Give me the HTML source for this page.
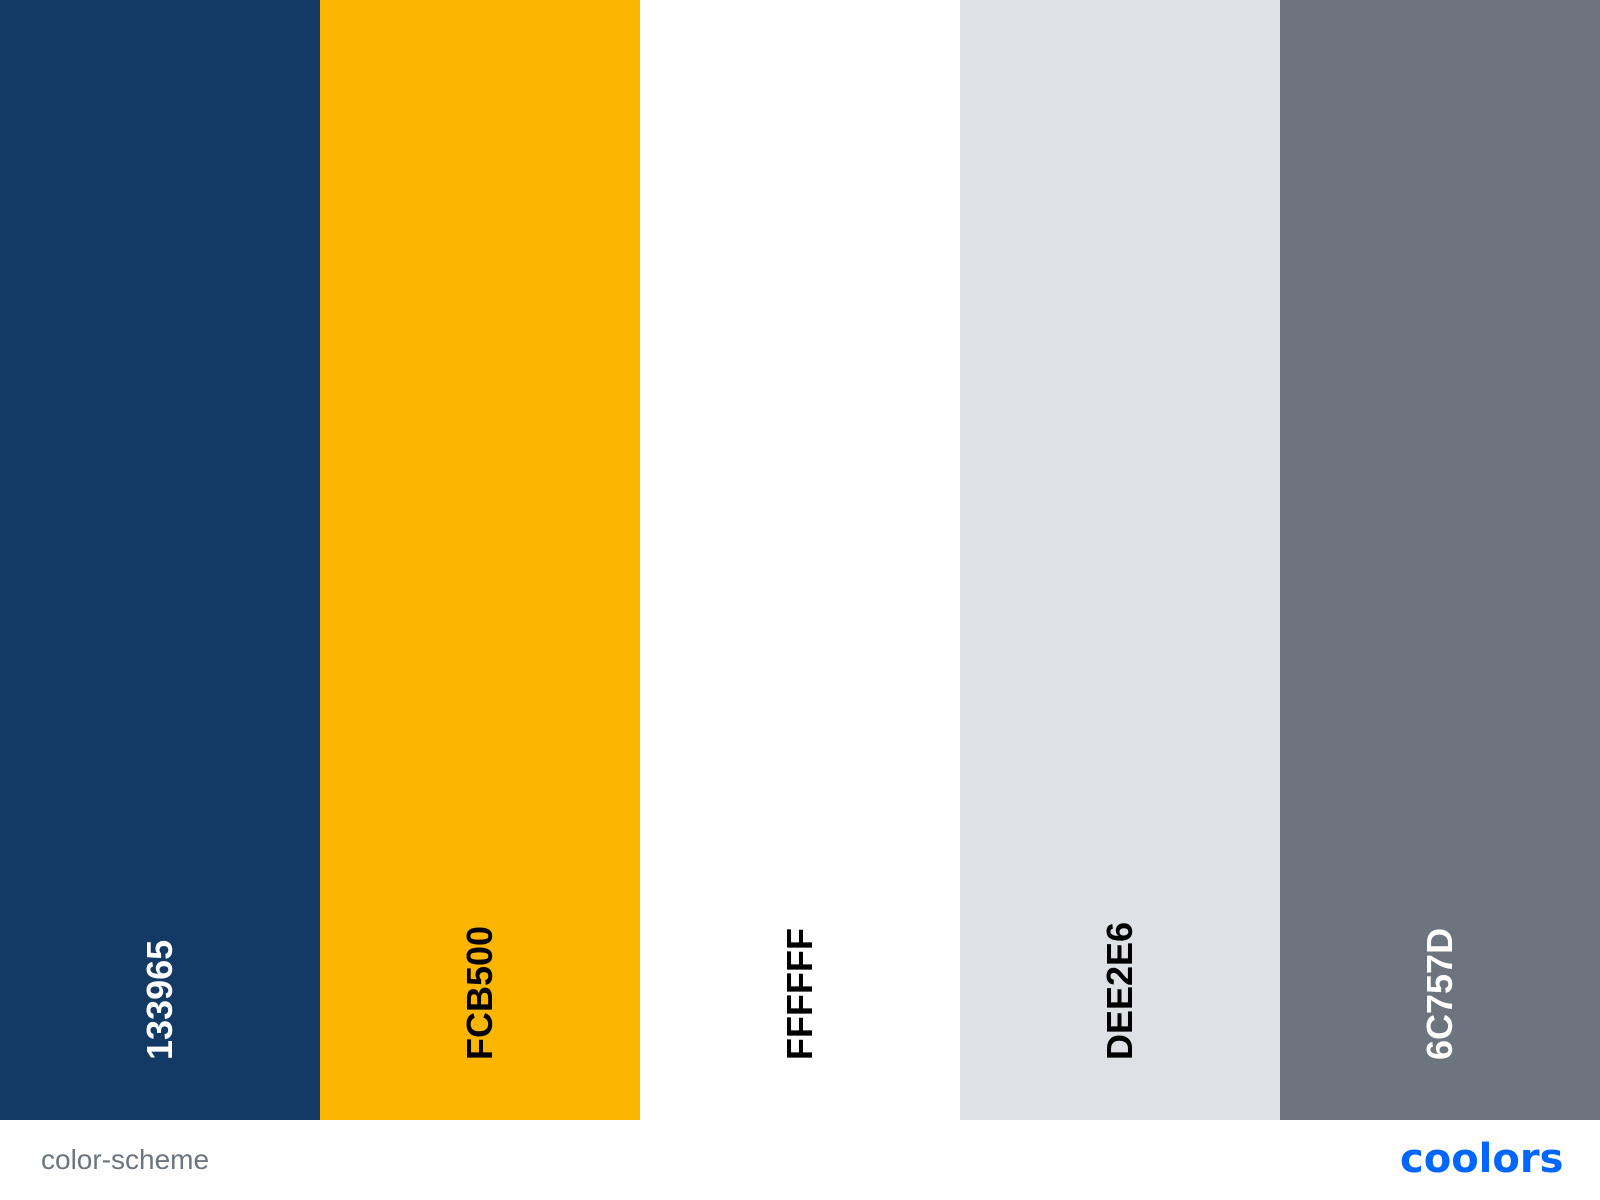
<!DOCTYPE html>
<html><head><meta charset="utf-8"><style>
html,body{margin:0;padding:0;width:1600px;height:1200px;background:#fff;overflow:hidden;font-family:"Liberation Sans",sans-serif}
.c{position:absolute;top:0;height:1120px;width:320px}
.t{position:absolute;top:1042px;font-size:36px;line-height:36px;font-weight:bold;transform-origin:0 50%;transform:rotate(-90deg);white-space:nowrap;letter-spacing:0}
</style></head><body>
<div class="c" style="left:0;background:#133965"></div>
<div class="c" style="left:320px;background:#FCB500"></div>
<div class="c" style="left:640px;background:#FFFFFF"></div>
<div class="c" style="left:960px;background:#DEE2E6"></div>
<div class="c" style="left:1280px;background:#6C757D"></div>
<div class="t" style="left:160px;color:#fff">133965</div>
<div class="t" style="left:480px;color:#000">FCB500</div>
<div class="t" style="left:800px;color:#000">FFFFFF</div>
<div class="t" style="left:1120px;color:#000">DEE2E6</div>
<div class="t" style="left:1440px;color:#fff">6C757D</div>
<div style="position:absolute;left:41px;top:1144px;font-size:28px;color:#6c757d">color-scheme</div>
<div style="position:absolute;left:1400px;top:1136px;font-size:40px;font-weight:bold;color:#0066ff;letter-spacing:0;font-family:'DejaVu Sans',sans-serif">coolors</div>
</body></html>
